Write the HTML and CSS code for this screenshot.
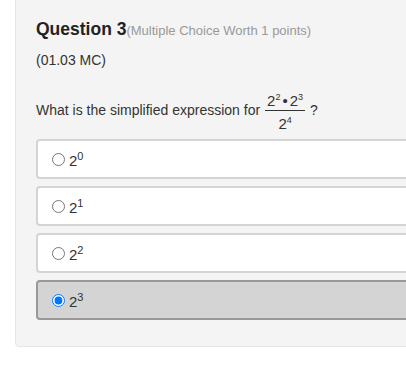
FILE: index.html
```html
<!DOCTYPE html>
<html lang="en">
<head>
  <meta charset="UTF-8" />
  <title>Question 3</title>
  <link rel="stylesheet" href="styles.css">
</head>
<body>
  <div class="panel">
    <h2 class="qtitle">Question 3<span class="worth">(Multiple Choice Worth 1 points)</span></h2>
    <p class="code">(01.03 MC)</p>
    <p class="prompt">
      <span>What is the simplified expression for</span>
      <span class="frac">
        <span class="num">2<sup>2</sup><span class="dot">&bull;</span>2<sup>3</sup></span>
        <span class="den">2<sup>4</sup></span>
      </span>
      <span>?</span>
    </p>

    <label class="option"><input type="radio" name="q3" /><span>2<sup>0</sup></span></label>
    <label class="option"><input type="radio" name="q3" /><span>2<sup>1</sup></span></label>
    <label class="option"><input type="radio" name="q3" /><span>2<sup>2</sup></span></label>
    <label class="option selected"><input type="radio" name="q3" checked /><span>2<sup>3</sup></span></label>
  </div>
</body>
</html>
```

FILE: styles.css
```css
body {
  margin: 0;
  background: #fff;
  font-family: "Liberation Sans", Arial, sans-serif;
  color: #333;
  overflow: hidden;
}
.panel {
  margin: -10px -20px 0 15px;
  padding: 28px 0 26px 20px;
  background: #f4f4f4;
  border: 1px solid #e6e6e6;
  border-radius: 0 0 0 4px;
}
.qtitle {
  margin: 0;
  font-size: 17.5px;
  font-weight: bold;
  color: #222;
}
.worth {
  font-size: 13px;
  font-weight: normal;
  color: #999;
}
.code {
  margin: 12px 0 0;
  font-size: 14px;
}
.prompt {
  margin: 19px 0 0;
  font-size: 14px;
  display: flex;
  align-items: center;
  gap: 5px;
}
.frac {
  display: inline-flex;
  flex-direction: column;
  align-items: center;
  font-size: 15px;
  line-height: 17px;
  margin-top: 2px;
}
.num {
  border-bottom: 1px solid #333;
  padding: 0 2px 1px;
}
.den {
  padding-top: 1px;
}
.dot {
  margin: 0 2px;
}
.frac sup {
  font-size: 9px;
  vertical-align: 6px;
}
.option {
  display: flex;
  align-items: center;
  height: 36px;
  margin-top: 7px;
  padding-left: 14px;
  background: #fff;
  border: 2px solid #d4d4d4;
  border-radius: 4px;
  font-size: 15px;
  color: #333;
}
.prompt + .option {
  margin-top: 7px;
}
.option input {
  margin: 0 4px 0 0;
  width: 13px;
  height: 13px;
}
.option sup {
  font-size: 11px;
  vertical-align: 6px;
}
.option.selected {
  background: #d4d4d4;
  border-color: #999;
}
```
